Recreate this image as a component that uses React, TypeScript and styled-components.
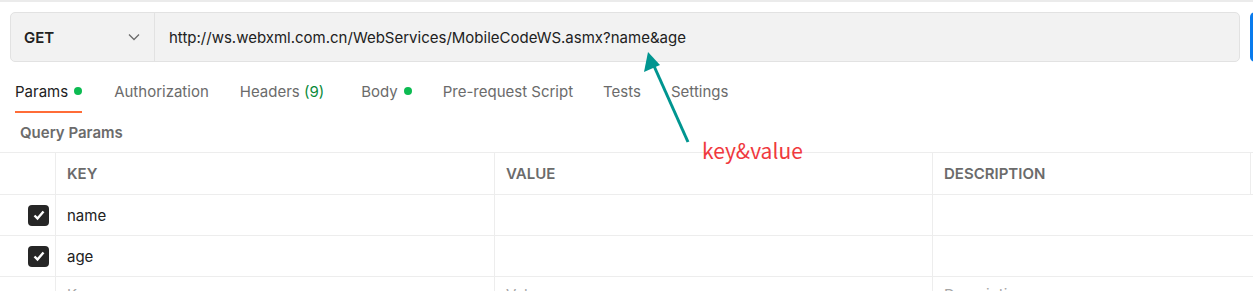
import React from "react";
import styled, { createGlobalStyle } from "styled-components";

const GlobalStyle = createGlobalStyle`
  html, body {
    margin: 0;
    padding: 0;
    background: #ffffff;
    font-family: Inter, "Noto Sans", "Liberation Sans", sans-serif;
    overflow: hidden;
  }
`;

const Page = styled.div`
  position: relative;
  width: 1253px;
  height: 291px;
  overflow: hidden;
  border-top: 2px solid #ebebeb;
  box-sizing: border-box;
`;

const RequestRow = styled.div`
  display: flex;
  gap: 10px;
  padding: 10px 0 0 10px;
  overflow: hidden;
`;

const RequestBar = styled.div`
  display: flex;
  align-items: center;
  flex-shrink: 0;
  width: 1230px;
  height: 50px;
  box-sizing: border-box;
  background: #f2f2f2;
  border: 1px solid #e2e2e2;
  border-radius: 5px;
`;

const MethodSelect = styled.div`
  display: flex;
  align-items: center;
  justify-content: space-between;
  width: 144px;
  height: 100%;
  box-sizing: border-box;
  padding: 0 14px 0 13px;
  border-right: 1px solid #e2e2e2;
  font-size: 15px;
  font-weight: 600;
  color: #212121;
`;

const UrlText = styled.div`
  padding-left: 14px;
  font-size: 15px;
  color: #212121;
  padding-top: 1px;
`;

const SendButton = styled.div`
  flex-shrink: 0;
  width: 20px;
  height: 50px;
  background: #097bed;
  border-radius: 5px 0 0 5px;
`;

const Tabs = styled.div`
  display: flex;
  align-items: flex-start;
  padding: 18px 0 0 15px;
  height: 32px;
`;

const Tab = styled.div<{ $active?: boolean; $gap: number }>`
  display: flex;
  align-items: center;
  gap: 6px;
  margin-right: ${(p) => p.$gap}px;
  height: 33px;
  box-sizing: border-box;
  padding-bottom: 9px;
  font-size: 15px;
  color: ${(p) => (p.$active ? "#212121" : "#6b6b6b")};
  border-bottom: 2px solid ${(p) => (p.$active ? "#ff6c37" : "transparent")};
`;

const Dot = styled.span`
  width: 8px;
  height: 8px;
  border-radius: 50%;
  background: #0cbb52;
`;

const Count = styled.span`
  color: #0a8a3a;
`;

const SectionTitle = styled.div`
  padding: 11px 0 0 20px;
  height: 29px;
  font-size: 15px;
  font-weight: 600;
  color: #6b6b6b;
`;

const Table = styled.div`
  display: grid;
  grid-template-columns: 56px 439px 438px 318px 1fr;
  border-top: 1px solid #ededed;
`;

const Cell = styled.div<{ $head?: boolean; $line?: boolean }>`
  display: flex;
  align-items: center;
  height: ${(p) => (p.$head ? 41 : 40)}px;
  padding-left: 11px;
  border-bottom: 1px solid #ededed;
  border-right: ${(p) => (p.$line ? "1px solid #ededed" : "none")};
  font-size: 15px;
  font-weight: ${(p) => (p.$head ? 600 : 400)};
  color: ${(p) => (p.$head ? "#6b6b6b" : "#212121")};
`;

const CheckCell = styled.div<{ $head?: boolean }>`
  display: flex;
  align-items: center;
  justify-content: flex-end;
  padding-right: 6px;
  height: ${(p) => (p.$head ? 41 : 40)}px;
  border-bottom: 1px solid #ededed;
  border-right: 1px solid #ededed;
`;

const Placeholder = styled.span`
  color: #a6a6a6;
  margin-bottom: 6px;
`;

const Checkbox = styled.span`
  display: flex;
  align-items: center;
  justify-content: center;
  width: 21px;
  height: 21px;
  border-radius: 4px;
  background: #262626;
`;

const Note = styled.div`
  position: absolute;
  left: 702px;
  top: 133px;
  font-family: "Noto Sans CJK SC", "Noto Sans", sans-serif;
  font-size: 21px;
  color: #f0393e;
`;

const Arrow = styled.svg`
  position: absolute;
  left: 0;
  top: 0;
  pointer-events: none;
`;

const Chevron = () => (
  <svg width="12" height="8" viewBox="0 0 12 8">
    <path d="M1 1.5 L6 6.5 L11 1.5" fill="none" stroke="#6b6b6b" strokeWidth="1.3" />
  </svg>
);

const Tick = () => (
  <svg width="14" height="14" viewBox="0 0 14 14">
    <path d="M2.5 7.5 L5.5 10.5 L11.5 3.5" fill="none" stroke="#ffffff" strokeWidth="2.4" />
  </svg>
);

const rows = ["name", "age"];

const App = () => {
  return (
    <Page>
      <GlobalStyle />
      <RequestRow>
        <RequestBar>
          <MethodSelect>
            GET
            <Chevron />
          </MethodSelect>
          <UrlText>http://ws.webxml.com.cn/WebServices/MobileCodeWS.asmx?name&amp;age</UrlText>
        </RequestBar>
        <SendButton />
      </RequestRow>
      <Tabs>
        <Tab $active $gap={32}>
          Params <Dot />
        </Tab>
        <Tab $gap={31}>Authorization</Tab>
        <Tab $gap={37}>
          <span>
            Headers <Count>(9)</Count>
          </span>
        </Tab>
        <Tab $gap={31}>
          Body <Dot />
        </Tab>
        <Tab $gap={30}>Pre-request Script</Tab>
        <Tab $gap={30}>Tests</Tab>
        <Tab $gap={0}>Settings</Tab>
      </Tabs>
      <SectionTitle>Query Params</SectionTitle>
      <Table>
        <CheckCell $head />
        <Cell $head $line>KEY</Cell>
        <Cell $head $line>VALUE</Cell>
        <Cell $head $line>DESCRIPTION</Cell>
        <Cell $head />
        {rows.map((r) => (
          <React.Fragment key={r}>
            <CheckCell>
              <Checkbox>
                <Tick />
              </Checkbox>
            </CheckCell>
            <Cell $line>{r}</Cell>
            <Cell $line />
            <Cell />
            <Cell />
          </React.Fragment>
        ))}
        <CheckCell />
        <Cell $line>
          <Placeholder>Key</Placeholder>
        </Cell>
        <Cell $line>
          <Placeholder>Value</Placeholder>
        </Cell>
        <Cell>
          <Placeholder>Description</Placeholder>
        </Cell>
        <Cell />
      </Table>
      <Arrow width="1253" height="291">
        <line x1="688" y1="140" x2="654" y2="64" stroke="#009590" strokeWidth="3" />
        <polygon points="648,50 644,70 660,63" fill="#009590" />
      </Arrow>
      <Note>key&amp;value</Note>
    </Page>
  );
};

export default App;
